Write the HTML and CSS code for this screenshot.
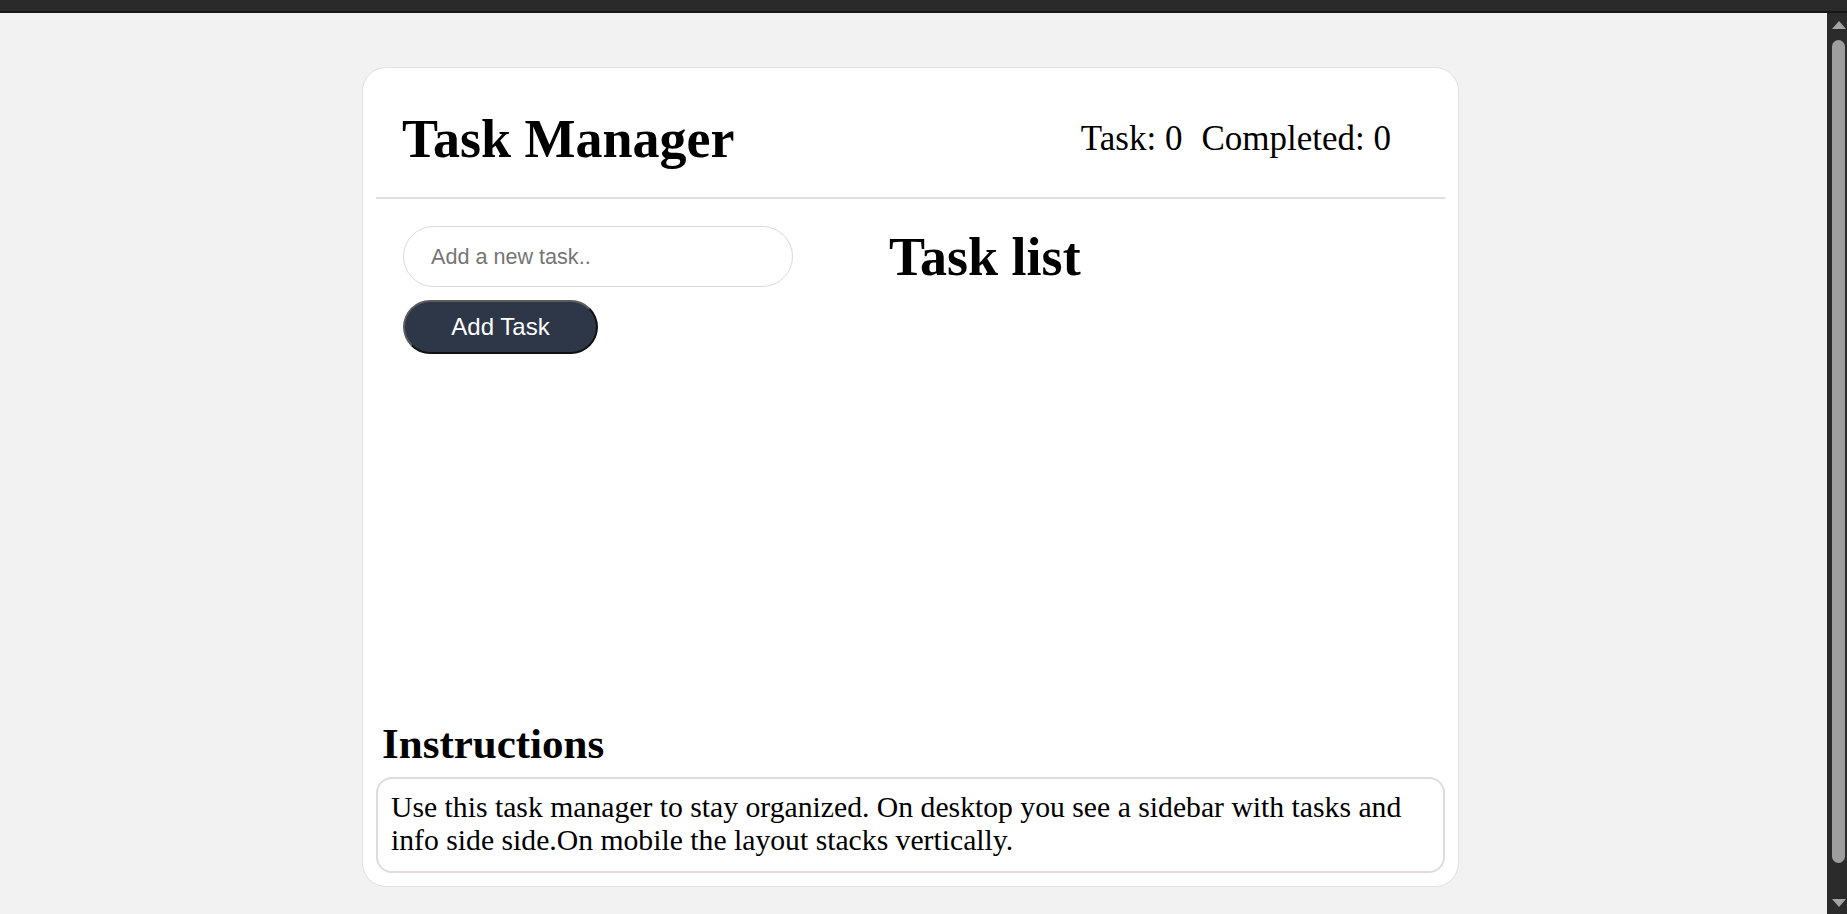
FILE: index.html
```html
<!DOCTYPE html>
<html lang="en">
<head>
<meta charset="utf-8">
<title>Task Manager</title>
<link rel="stylesheet" href="styles.css">
</head>
<body>
<div class="topbar"></div>
<div class="window">
  <div class="viewport">
    <main class="card">
      <header class="card-header">
        <h1 class="title">Task Manager</h1>
        <div class="stats"><span>Task: 0</span><span>Completed: 0</span></div>
      </header>
      <section class="workspace">
        <div class="composer">
          <input class="task-input" type="text" placeholder="Add a new task..">
          <button class="add-btn" type="button">Add Task</button>
        </div>
        <div class="task-list">
          <h2 class="list-title">Task list</h2>
        </div>
      </section>
      <section class="instructions">
        <h2 class="instructions-title">Instructions</h2>
        <p class="instructions-text">Use this task manager to stay organized. On desktop you see a sidebar with tasks and info side side.On mobile the layout stacks vertically.</p>
      </section>
    </main>
  </div>
  <div class="scrollbar" aria-hidden="true">
    <div class="sb-button sb-up"><span class="arrow-up"></span></div>
    <div class="sb-track"><div class="sb-thumb"></div></div>
    <div class="sb-button sb-down"><span class="arrow-down"></span></div>
  </div>
</div>
</body>
</html>
```
FILE: styles.css
```css
html, body {
  margin: 0;
  height: 100%;
}
body {
  display: flex;
  flex-direction: column;
  overflow: hidden;
  background: #f2f2f2;
  font-family: "Liberation Serif", "Times New Roman", serif;
  color: #000;
}
.topbar {
  flex: 0 0 11px;
  background: #2a2a2a;
  border-bottom: 2px solid #171717;
}
.window {
  flex: 1 1 auto;
  display: flex;
  min-height: 0;
}
.viewport {
  flex: 1 1 auto;
  overflow: hidden;
  padding: 54px 6px 0 0;
}

/* scrollbar */
.scrollbar {
  flex: 0 0 20px;
  display: flex;
  flex-direction: column;
  background: #2b2b2b;
  padding-left: 3px;
  box-sizing: border-box;
}
.sb-button {
  flex: 0 0 27px;
  display: flex;
  justify-content: center;
  box-sizing: border-box;
}
.sb-up {
  padding-top: 8px;
}
.sb-down {
  padding-top: 12px;
}
.arrow-up {
  width: 0;
  height: 0;
  border-left: 7.5px solid transparent;
  border-right: 7.5px solid transparent;
  border-bottom: 8px solid #a3a3a3;
}
.arrow-down {
  width: 0;
  height: 0;
  border-left: 7.5px solid transparent;
  border-right: 7.5px solid transparent;
  border-top: 8px solid #a3a3a3;
}
.sb-track {
  flex: 1 1 auto;
  display: flex;
  justify-content: center;
}
.sb-thumb {
  width: 13px;
  height: 823px;
  background: #9e9e9e;
  border-radius: 7px;
}

/* card */
.card {
  display: block;
  width: 1097px;
  box-sizing: border-box;
  margin: 0 auto;
  padding: 13px;
  background: #fff;
  border: 1px solid #e2dfdf;
  border-radius: 24px;
}
.card-header {
  display: flex;
  align-items: center;
  justify-content: space-between;
  height: 118px;
  box-sizing: border-box;
  padding: 0 54px 0 26px;
  border-bottom: 2px solid #e1dede;
}
.title {
  margin: 0;
  font-size: 54px;
  font-weight: bold;
  line-height: normal;
}
.stats {
  display: flex;
  gap: 19px;
  font-size: 35px;
  line-height: normal;
}
.workspace {
  display: flex;
  align-items: flex-start;
  gap: 96px;
  height: 520px;
  box-sizing: border-box;
  padding: 27px 27px 0;
}
.composer {
  display: flex;
  flex-direction: column;
  align-items: flex-start;
  gap: 13px;
  flex: 0 0 390px;
}
.task-input {
  width: 390px;
  height: 61px;
  box-sizing: border-box;
  margin: 0;
  padding: 0 27px;
  border: 1px solid #ddd8d8;
  border-radius: 31px;
  font-family: "Liberation Sans", Arial, sans-serif;
  font-size: 21.6px;
  color: #000;
  background: #fff;
  outline: none;
}
.task-input::placeholder {
  color: #757575;
}
.add-btn {
  width: 195px;
  height: 54px;
  box-sizing: border-box;
  margin: 0;
  padding: 0;
  background: #2e3748;
  color: #fff;
  border: 2px solid;
  border-color: #5c5c5c #111 #111 #5c5c5c;
  border-radius: 27px;
  font-family: "Liberation Sans", Arial, sans-serif;
  font-size: 24px;
}
.task-list {
  flex: 1 1 auto;
}
.list-title {
  margin: 0;
  font-size: 54px;
  font-weight: bold;
  line-height: normal;
}
.instructions-title {
  margin: 0 0 9px 6px;
  font-size: 43px;
  font-weight: bold;
  line-height: normal;
}
.instructions-text {
  margin: 0;
  padding: 12px 10px 14px 13px;
  border: 2px solid #e0dcdc;
  border-radius: 16px;
  font-size: 29.7px;
  line-height: normal;
}
```
